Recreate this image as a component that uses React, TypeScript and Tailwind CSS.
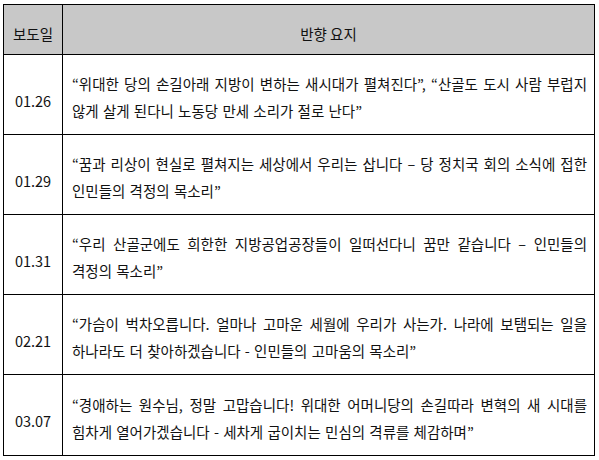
import React from "react";

const rows: { date: string; lines: string[] }[] = [
  {
    date: "01.26",
    lines: [
      "“위대한 당의 손길아래 지방이 변하는 새시대가 펼쳐진다”, “산골도 도시 사람 부럽지",
      "않게 살게 된다니 노동당 만세 소리가 절로 난다”",
    ],
  },
  {
    date: "01.29",
    lines: [
      "“꿈과 리상이 현실로 펼쳐지는 세상에서 우리는 삽니다 – 당 정치국 회의 소식에 접한",
      "인민들의 격정의 목소리”",
    ],
  },
  {
    date: "01.31",
    lines: [
      "“우리 산골군에도 희한한 지방공업공장들이 일떠선다니 꿈만 같습니다 – 인민들의",
      "격정의 목소리”",
    ],
  },
  {
    date: "02.21",
    lines: [
      "“가슴이 벅차오릅니다. 얼마나 고마운 세월에 우리가 사는가. 나라에 보탬되는 일을",
      "하나라도 더 찾아하겠습니다 - 인민들의 고마움의 목소리”",
    ],
  },
  {
    date: "03.07",
    lines: [
      "“경애하는 원수님, 정말 고맙습니다! 위대한 어머니당의 손길따라 변혁의 새 시대를",
      "힘차게 열어가겠습니다 - 세차게 굽이치는 민심의 격류를 체감하며”",
    ],
  },
];

export default function App() {
  return (
    <div
      className="w-[599px] h-[460px] bg-white pt-[4px] pl-[3px] text-[#111]"
      style={{ fontFamily: '"Noto Sans CJK KR", "Noto Sans", sans-serif' }}
    >
      <div className="w-[592px] border border-black text-[14.5px]">
        <div className="grid grid-cols-[59px_1fr] h-[50px] bg-[#c8c8c8] border-b border-black">
          <div className="border-r border-black flex items-center justify-center pt-[8px]">
            보도일
          </div>
          <div className="flex items-center justify-center pt-[8px]">반향 요지</div>
        </div>
        {rows.map((r, i) => (
          <div
            key={r.date}
            className={
              "grid grid-cols-[59px_1fr] h-[80px] " +
              (i < rows.length - 1 ? "border-b border-black" : "")
            }
          >
            <div className="border-r border-black flex items-center justify-center pt-[12px]">
              {r.date}
            </div>
            <div className="flex flex-col justify-center pl-[9px] pr-[7px] pt-[5px] leading-[27px] [word-spacing:1px]">
              <div className="text-justify [text-align-last:justify] whitespace-nowrap">
                {r.lines[0]}
              </div>
              <div className="whitespace-nowrap">{r.lines[1]}</div>
            </div>
          </div>
        ))}
      </div>
    </div>
  );
}
